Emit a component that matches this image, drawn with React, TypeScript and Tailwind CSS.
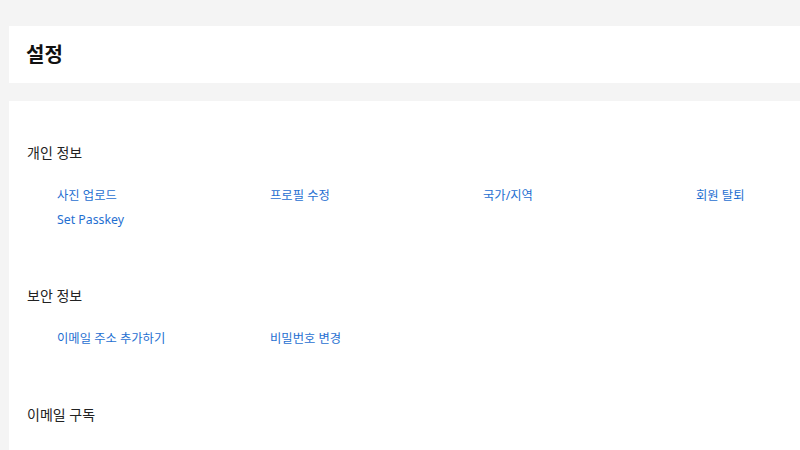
import React from 'react';

const FONT = '"Noto Sans", "Noto Sans CJK KR", sans-serif';

interface Section {
  title: string;
  links: string[];
}

const SECTIONS: Section[] = [
  { title: '개인 정보', links: ['사진 업로드', '프로필 수정', '국가/지역', '회원 탈퇴', 'Set Passkey'] },
  { title: '보안 정보', links: ['이메일 주소 추가하기', '비밀번호 변경'] },
  { title: '이메일 구독', links: [] },
];

export default function App() {
  return (
    <div
      className="w-screen h-screen overflow-hidden bg-[#f4f4f4] pt-[26px] pl-[9px]"
      style={{ fontFamily: FONT }}
    >
      <div className="w-[900px]">
        {/* Header */}
        <div className="bg-white h-[57px] flex items-center px-[17px]">
          <h1 className="text-[20px] font-bold text-[#111] leading-none">설정</h1>
        </div>

        {/* Body */}
        <div className="bg-white mt-[18px] pt-[42px] pl-[18px] pb-10 h-[400px]">
          {SECTIONS.map(section => (
            <div key={section.title} className="mb-[56px]">
              <h2 className="text-[14px] text-[#222] leading-[20px]">{section.title}</h2>
              {section.links.length > 0 && (
                <div className="grid grid-cols-[213px_213px_213px_213px] pl-[30px] mt-[23px] gap-y-[4px]">
                  {section.links.map(link => (
                    <a key={link} href="#" className="text-[12.3px] leading-[20px] text-[#1f6fd1]">
                      {link}
                    </a>
                  ))}
                </div>
              )}
            </div>
          ))}
        </div>
      </div>
    </div>
  );
}
